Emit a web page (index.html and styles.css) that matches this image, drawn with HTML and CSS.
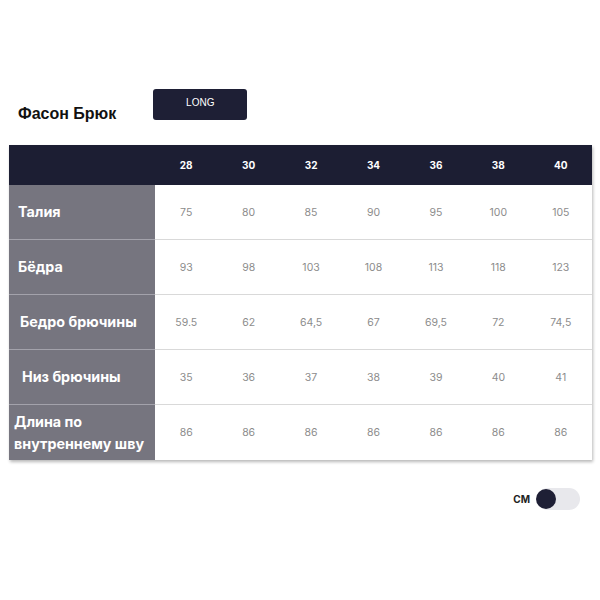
FILE: index.html
```html
<!DOCTYPE html>
<html lang="ru">
<head>
<meta charset="utf-8">
<link rel="stylesheet" href="styles.css">
</head>
<body>
<div class="page">
  <div class="top">
    <h1 class="title">Фасон Брюк</h1>
    <button class="fit-btn">LONG</button>
  </div>
  <div class="table">
    <div class="hcell hlabel"></div>
    <div class="hcell">28</div><div class="hcell">30</div><div class="hcell">32</div><div class="hcell">34</div><div class="hcell">36</div><div class="hcell">38</div><div class="hcell">40</div>

    <div class="label">Талия</div>
    <div class="cell">75</div><div class="cell">80</div><div class="cell">85</div><div class="cell">90</div><div class="cell">95</div><div class="cell">100</div><div class="cell">105</div>

    <div class="label">Бёдра</div>
    <div class="cell">93</div><div class="cell">98</div><div class="cell">103</div><div class="cell">108</div><div class="cell">113</div><div class="cell">118</div><div class="cell">123</div>

    <div class="label label-2">Бедро брючины</div>
    <div class="cell">59.5</div><div class="cell">62</div><div class="cell">64,5</div><div class="cell">67</div><div class="cell">69,5</div><div class="cell">72</div><div class="cell">74,5</div>

    <div class="label label-3">Низ брючины</div>
    <div class="cell">35</div><div class="cell">36</div><div class="cell">37</div><div class="cell">38</div><div class="cell">39</div><div class="cell">40</div><div class="cell">41</div>

    <div class="label label-last last">Длина по внутреннему шву</div>
    <div class="cell last">86</div><div class="cell last">86</div><div class="cell last">86</div><div class="cell last">86</div><div class="cell last">86</div><div class="cell last">86</div><div class="cell last">86</div>
  </div>
  <div class="units">
    <span class="unit-label">CM</span>
    <span class="switch"><span class="knob"></span></span>
  </div>
</div>
</body>
</html>
```

FILE: styles.css
```css
* { box-sizing: border-box; }
body {
  margin: 0;
  background: #fff;
  font-family: "Liberation Sans", Arial, sans-serif;
}
.page {
  padding: 89px 8px 0 9px;
}
.top {
  display: flex;
  align-items: flex-end;
  height: 31px;
}
.title {
  margin: 0 37px 0 9px;
  font-size: 16px;
  font-weight: 700;
  color: #111;
  line-height: 18px;
  margin-bottom: -3px;
}
.fit-btn {
  width: 94px;
  height: 31px;
  background: #1e1f35;
  color: #fff;
  border: none;
  border-radius: 3px;
  font-family: "Liberation Sans", Arial, sans-serif;
  font-size: 10px;
  padding: 0 0 4px 0;
  align-self: flex-start;
}
.table {
  margin-top: 25px;
  display: grid;
  grid-template-columns: 146px repeat(7, 1fr);
  grid-template-rows: 40px repeat(5, 55px);
  box-shadow: 1px 2px 3px rgba(0, 0, 0, 0.28);
}
.hcell {
  background: #1c1e33;
  color: #fff;
  font-family: Inter, "Liberation Sans", sans-serif;
  font-weight: 700;
  font-size: 10px;
  display: flex;
  align-items: center;
  justify-content: center;
}
.label {
  background: #76757f;
  color: #fff;
  font-family: Inter, "Liberation Sans", sans-serif;
  font-weight: 700;
  font-size: 14.3px;
  display: flex;
  align-items: center;
  padding-left: 9px;
  border-bottom: 1px solid #a3a2ab;
  line-height: 22px;
}
.label-2 { padding-left: 11px; }
.label-3 { padding-left: 13px; }
.label-last { padding-left: 5px; padding-right: 0; }
.cell {
  background: #fff;
  color: #8c8c8c;
  font-family: Inter, "Liberation Sans", sans-serif;
  font-weight: 400;
  font-size: 10.5px;
  display: flex;
  align-items: center;
  justify-content: center;
  border-bottom: 1px solid #d9d9d9;
}
.last { border-bottom: none; }
.units {
  margin-top: 28px;
  display: flex;
  justify-content: flex-end;
  align-items: center;
  padding-right: 12px;
  gap: 7px;
}
.unit-label {
  font-family: Inter, "Liberation Sans", sans-serif;
  font-weight: 700;
  font-size: 10px;
  color: #222;
}
.switch {
  width: 43px;
  height: 22px;
  border-radius: 11px;
  background: #e8e8ec;
  display: flex;
  align-items: center;
}
.knob {
  width: 20px;
  height: 20px;
  border-radius: 50%;
  background: #1e1f35;
  margin-left: -1px;
}
```
